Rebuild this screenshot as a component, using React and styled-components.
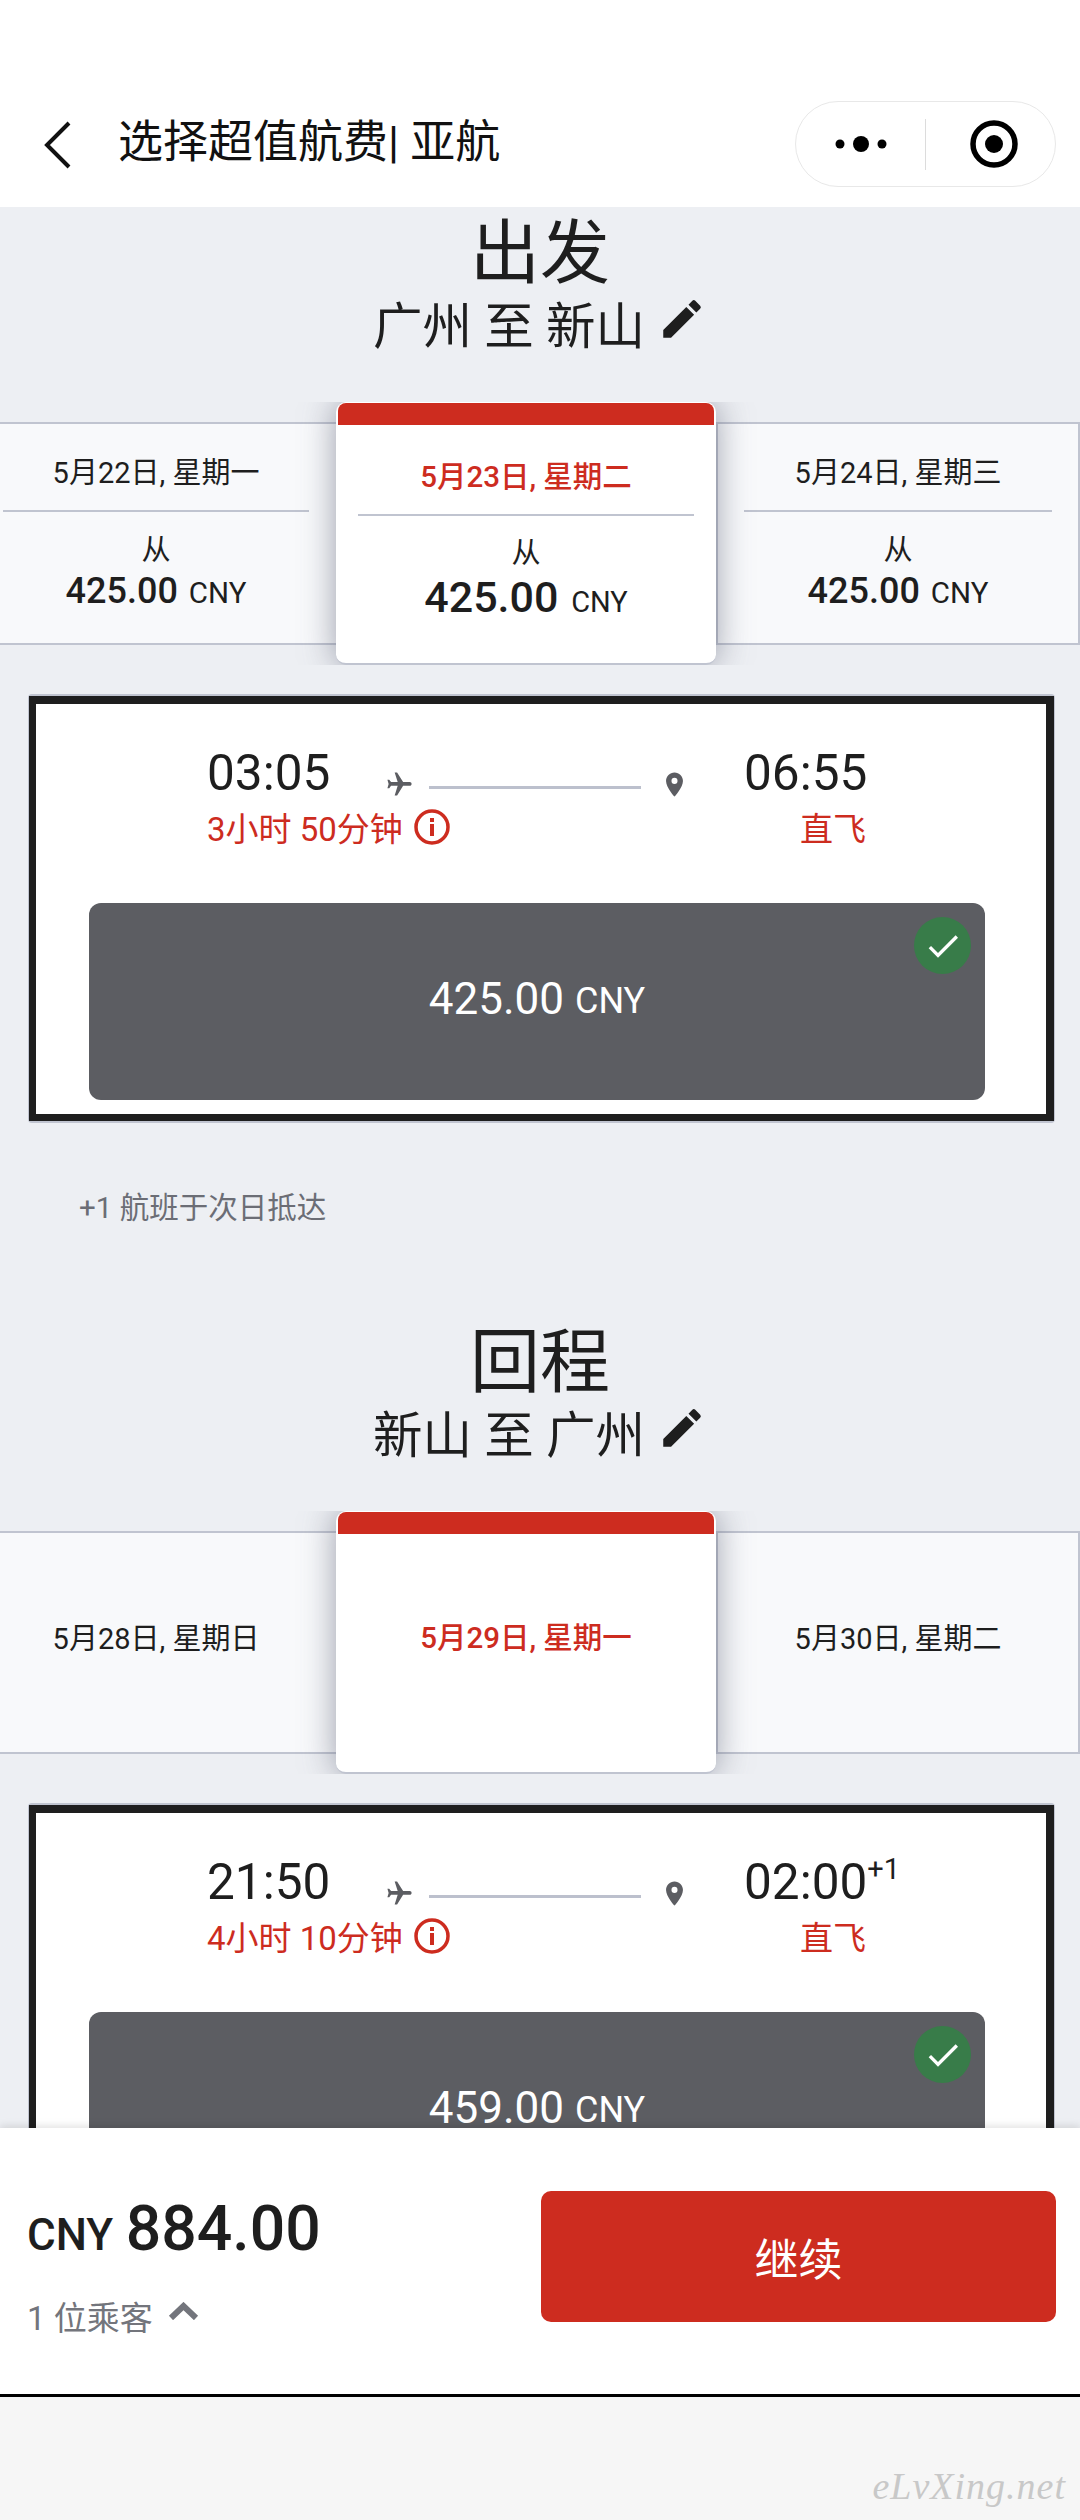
import styled, { createGlobalStyle } from "styled-components";
import { MdEdit, MdFlight, MdPlace, MdCheck } from "react-icons/md";

const GlobalStyle = createGlobalStyle`
  html, body { margin: 0; padding: 0; background: #fff; }
  * { box-sizing: border-box; }
  body { font-family: Roboto, "Noto Sans CJK SC", sans-serif; color: #1e1e1e; }
`;

const Page = styled.div`
  width: 1080px;
  height: 2520px;
  display: flex;
  flex-direction: column;
  overflow: hidden;
`;

const TopBar = styled.header`
  height: 207px;
  flex: none;
  background: #fff;
  display: flex;
  align-items: flex-end;
  padding: 0 24px 20px 43px;
`;

const BackIcon = styled.svg`
  width: 30px;
  height: 48px;
  margin-bottom: 18px;
`;

const PageTitle = styled.h1`
  margin: 0 0 17px 45px;
  flex: 1;
  font-size: 45px;
  line-height: 54px;
  font-weight: 400;
  color: #111;
`;

const Capsule = styled.div`
  width: 261px;
  height: 86px;
  border: 1px solid #e8e8e8;
  border-radius: 43px;
  display: flex;
  align-items: center;
`;

const CapsuleSide = styled.div`
  flex: none;
  width: 129px;
  height: 100%;
  display: flex;
  align-items: center;
  justify-content: center;
  padding-left: ${(p) => (p.$ring ? "6px" : "0")};
`;

const CapsuleDivider = styled.div`
  width: 1px;
  height: 51px;
  background: #dcdcdc;
`;

const Content = styled.main`
  flex: 1;
  min-height: 0;
  overflow: hidden;
  background: #edeff3;
`;

const Section = styled.section`
  display: flex;
  flex-direction: column;
  align-items: center;
  padding-top: ${(p) => p.$top}px;
`;

const Heading = styled.h2`
  margin: 0;
  font-size: 70px;
  line-height: 86px;
  font-weight: 400;
  color: #1e1e1e;
`;

const Route = styled.div`
  display: flex;
  align-items: center;
  gap: 12px;
  height: 50px;
  font-size: 49.5px;
  color: #1e1e1e;
  svg { font-size: 50px; margin-top: -6px; }
`;

const DateRow = styled.div`
  width: 1080px;
  margin-top: 55px;
  height: 263px;
  display: flex;
  align-items: center;
`;

const DateCard = styled.div`
  flex: ${(p) => (p.$side === "left" ? "none" : "1")};
  width: ${(p) => (p.$side === "left" ? "336px" : "auto")};
  height: 223px;
  background: #f8f9fb;
  border: 2px solid #c0c4d0;
  border-left: ${(p) => (p.$side === "left" ? "none" : "2px solid #c0c4d0")};
  border-right: ${(p) => (p.$side === "left" ? "none" : "2px solid #c0c4d0")};
  display: flex;
  flex-direction: column;
  align-items: center;
  justify-content: ${(p) => (p.$fares ? "flex-start" : "center")};
  padding: ${(p) => (p.$side === "left" ? "0 27px 0 3px" : "0 26px 0 26px")};
`;

const ActiveCard = styled.div`
  width: 380px;
  height: 263px;
  flex: none;
  background: #fff;
  border-radius: 10px;
  border-bottom: 2px solid #c0c4d0;
  box-shadow: 0 0 34px rgba(90, 95, 115, 0.6);
  clip-path: inset(0 -44px 0 -44px);
  overflow: hidden;
  display: flex;
  flex-direction: column;
  align-items: center;
  position: relative;
  padding: 0 22px;
`;

const RedBand = styled.div`
  width: 376px;
  height: 22px;
  margin-top: 1px;
  flex: none;
  background: #cd2c1f;
  border-radius: 8px 8px 0 0;
`;

const ActiveBody = styled.div`
  flex: 1;
  width: 100%;
  display: flex;
  flex-direction: column;
  align-items: center;
  justify-content: ${(p) => (p.$fares ? "flex-start" : "center")};
  padding-bottom: ${(p) => (p.$fares ? "0" : "22px")};
`;

const DateLabel = styled.div`
  width: 100%;
  text-align: center;
  font-size: ${(p) => (p.$active ? "29.5px" : "29px")};
  line-height: 36px;
  color: ${(p) => (p.$active ? "#cd2c1f" : "#1e1e1e")};
  font-weight: ${(p) => (p.$active ? 500 : 400)};
  padding: ${(p) => (p.$fares ? `${p.$pad}px 0 0` : "0 0 8px")};
  height: ${(p) => (p.$fares ? `${p.$h}px` : "auto")};
`;

const DateRule = styled.div`
  width: 100%;
  height: 2px;
  flex: none;
  background: #c0c4d0;
`;

const From = styled.div`
  margin-top: ${(p) => p.$top}px;
  font-size: 29px;
  line-height: 36px;
`;

const Price = styled.div`
  margin-top: 1px;
  font-size: ${(p) => p.$size}px;
  line-height: ${(p) => p.$size + 8}px;
  font-weight: 500;
  span { font-size: ${(p) => p.$unit}px; font-weight: 400; margin-left: 2px; }
`;

const FlightCard = styled.div`
  align-self: flex-start;
  width: 1027px;
  margin: 29px 0 0 28px;
  background: #fff;
  border: 1px solid #c0c4d0;
  border-width: 2px 1px;
  border-radius: 4px;
`;

const FlightInner = styled.div`
  border: solid #1e1e1e;
  border-width: 8px 8px 7px 7px;
  padding: 41px 61px 14px 53px;
`;

const TimesRow = styled.div`
  display: grid;
  grid-template-columns: 178px 304px auto;
  padding-left: 118px;
`;

const TimeCol = styled.div`
  display: flex;
  flex-direction: column;
  margin-left: ${(p) => (p.$end ? "55px" : "0")};
`;

const Time = styled.div`
  font-size: 49.5px;
  line-height: 56px;
  white-space: nowrap;
  sup { font-size: 29px; line-height: 0; vertical-align: 20px; }
`;

const SubInfo = styled.div`
  display: flex;
  align-items: center;
  gap: 11px;
  margin-top: 6px;
  height: 40px;
  font-size: 33px;
  color: #cd2c1f;
  white-space: nowrap;
  width: ${(p) => (p.$end ? "122px" : "max-content")};
  justify-content: ${(p) => (p.$end ? "flex-end" : "flex-start")};
  svg { flex: none; }
`;

const Track = styled.div`
  display: flex;
  align-items: center;
  height: 52px;
  margin-top: 13px;
  color: #5c5d62;
  svg { flex: none; font-size: 29px; }
`;

const TrackLine = styled.div`
  flex: 1;
  height: 3px;
  margin: 6px 19px 0 15px;
  background: #bcc0cd;
`;

const FareButton = styled.div`
  position: relative;
  margin-top: 56px;
  height: 197px;
  padding-bottom: 6px;
  background: #5c5d62;
  border-radius: 12px;
  color: #fff;
  display: flex;
  align-items: center;
  justify-content: center;
  font-size: 44px;
  span { font-size: 36px; margin-left: 11px; margin-top: 4px; }
`;

const CheckBadge = styled.div`
  position: absolute;
  top: 14px;
  right: 14px;
  width: 57px;
  height: 57px;
  border-radius: 50%;
  background: #387c49;
  display: flex;
  align-items: center;
  justify-content: center;
  font-size: 40px;
`;

const Note = styled.div`
  align-self: flex-start;
  margin: 67px 0 0 79px;
  font-size: 29.5px;
  line-height: 36px;
  color: #6b6d75;
`;

const Footer = styled.footer`
  height: 266px;
  flex: none;
  background: #fff;
  display: flex;
  justify-content: space-between;
  align-items: flex-start;
  padding: 63px 24px 0 27px;
  position: relative;
  box-shadow: 0 -2px 8px rgba(0, 0, 0, 0.12);
`;

const Totals = styled.div`
  display: flex;
  flex-direction: column;
`;

const Total = styled.div`
  font-size: 62.5px;
  line-height: 76px;
  font-weight: 500;
  span { font-size: 44px; font-weight: 500; margin-right: -3px; }
`;

const Passengers = styled.div`
  display: flex;
  align-items: center;
  margin-top: 24px;
  font-size: 33px;
  line-height: 44px;
  color: #73757c;
`;

const Chevron = styled.svg`
  width: 31px;
  height: 18px;
  margin: -16px 0 0 15px;
`;

const ContinueButton = styled.button`
  width: 515px;
  height: 131px;
  border: none;
  border-radius: 10px;
  background: #cd2c1f;
  color: #fff;
  font: inherit;
  font-size: 44px;
`;

const SystemArea = styled.div`
  flex: none;
  height: 126px;
  border-top: 3px solid #000;
  background: #f6f6f6;
  display: flex;
  justify-content: flex-end;
  align-items: flex-end;
  padding: 0 14px 12px 0;
`;

const Watermark = styled.div`
  font-family: "Liberation Serif", serif;
  font-style: italic;
  font-size: 38px;
  letter-spacing: 1px;
  color: #c8c8c8;
`;

const sections = [
  {
    top: 4,
    title: "出发",
    route: "广州 至 新山",
    dates: ["5月22日, 星期一", "5月23日, 星期二", "5月24日, 星期三"],
    fares: true,
    dep: "03:05",
    arr: "06:55",
    duration: "3小时 50分钟",
    price: "425.00",
    note: "+1 航班于次日抵达",
  },
  {
    top: 94,
    title: "回程",
    route: "新山 至 广州",
    dates: ["5月28日, 星期日", "5月29日, 星期一", "5月30日, 星期二"],
    fares: false,
    dep: "21:50",
    arr: "02:00",
    plus: "+1",
    duration: "4小时 10分钟",
    price: "459.00",
  },
];

function InfoIcon() {
  return (
    <svg width="36" height="36" viewBox="0 0 36 36">
      <circle cx="18" cy="18" r="16" fill="none" stroke="#cd2c1f" strokeWidth="3.5" />
      <rect x="16" y="15" width="4" height="12" fill="#cd2c1f" />
      <rect x="16" y="9" width="4" height="4" fill="#cd2c1f" />
    </svg>
  );
}

function SideDate({ side, label, fares }) {
  return (
    <DateCard $side={side} $fares={fares}>
      <DateLabel $fares={fares} $h={86} $pad={31}>{label}</DateLabel>
      {fares && <DateRule />}
      {fares && <From $top={20}>从</From>}
      {fares && <Price $size={36} $unit={29.5}>425.00 <span>CNY</span></Price>}
    </DateCard>
  );
}

function FlightSection({ data }) {
  return (
    <Section $top={data.top}>
      <Heading>{data.title}</Heading>
      <Route>
        {data.route}
        <MdEdit />
      </Route>
      <DateRow>
        <SideDate side="left" label={data.dates[0]} fares={data.fares} />
        <ActiveCard>
          <RedBand />
          <ActiveBody $fares={data.fares}>
            <DateLabel $active $fares={data.fares} $h={89} $pad={34}>{data.dates[1]}</DateLabel>
            {data.fares && <DateRule />}
            {data.fares && <From $top={19}>从</From>}
            {data.fares && <Price $size={43} $unit={29}>425.00 <span>CNY</span></Price>}
          </ActiveBody>
        </ActiveCard>
        <SideDate side="right" label={data.dates[2]} fares={data.fares} />
      </DateRow>
      <FlightCard>
        <FlightInner>
          <TimesRow>
            <TimeCol>
              <Time>{data.dep}</Time>
              <SubInfo>
                {data.duration}
                <InfoIcon />
              </SubInfo>
            </TimeCol>
            <Track>
              <MdFlight style={{ transform: "rotate(90deg)" }} />
              <TrackLine />
              <MdPlace />
            </Track>
            <TimeCol $end>
              <Time>
                {data.arr}
                {data.plus && <sup>{data.plus}</sup>}
              </Time>
              <SubInfo $end>直飞</SubInfo>
            </TimeCol>
          </TimesRow>
          <FareButton>
            {data.price} <span>CNY</span>
            <CheckBadge>
              <MdCheck />
            </CheckBadge>
          </FareButton>
        </FlightInner>
      </FlightCard>
      {data.note && <Note>{data.note}</Note>}
    </Section>
  );
}

export default function App() {
  return (
    <Page>
      <GlobalStyle />
      <TopBar>
        <BackIcon viewBox="0 0 30 48">
          <path d="M26 2 L4 24 L26 46" fill="none" stroke="#111" strokeWidth="4" />
        </BackIcon>
        <PageTitle>选择超值航费| 亚航</PageTitle>
        <Capsule>
          <CapsuleSide>
            <svg width="52" height="20" viewBox="0 0 52 20">
              <circle cx="5" cy="10" r="4.5" />
              <circle cx="26" cy="10" r="8" />
              <circle cx="47" cy="10" r="4.5" />
            </svg>
          </CapsuleSide>
          <CapsuleDivider />
          <CapsuleSide $ring>
            <svg width="48" height="48" viewBox="0 0 48 48">
              <circle cx="24" cy="24" r="21" fill="none" stroke="#000" strokeWidth="5.5" />
              <circle cx="24" cy="24" r="9" />
            </svg>
          </CapsuleSide>
        </Capsule>
      </TopBar>
      <Content>
        {sections.map((s) => (
          <FlightSection key={s.title} data={s} />
        ))}
      </Content>
      <Footer>
        <Totals>
          <Total><span>CNY</span> 884.00</Total>
          <Passengers>
            1 位乘客
            <Chevron viewBox="0 0 31 18">
              <path d="M3 16 L15.5 4 L28 16" fill="none" stroke="#73757c" strokeWidth="6" />
            </Chevron>
          </Passengers>
        </Totals>
        <ContinueButton>继续</ContinueButton>
      </Footer>
      <SystemArea>
        <Watermark>eLvXing.net</Watermark>
      </SystemArea>
    </Page>
  );
}
